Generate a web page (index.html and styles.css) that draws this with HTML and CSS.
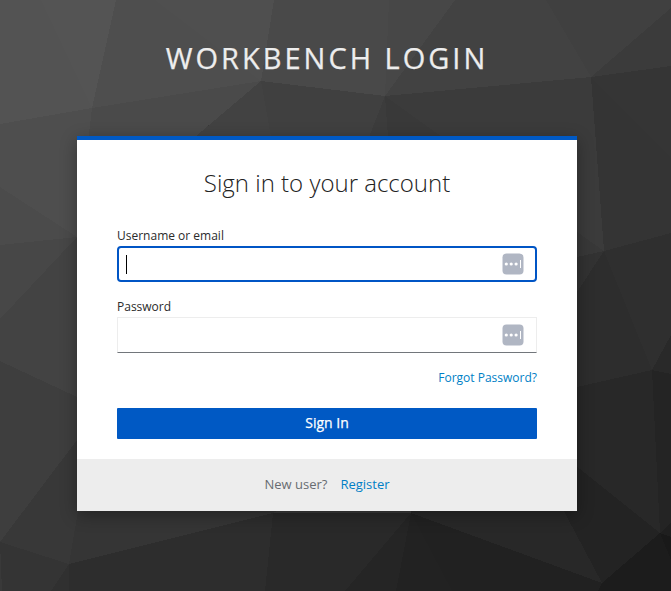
FILE: index.html
```html
<!DOCTYPE html>
<html lang="en">
<head>
<meta charset="utf-8">
<title>Workbench Login</title>
<link rel="stylesheet" href="styles.css">
</head>
<body>
<svg class="backdrop" viewBox="0 0 671 591" aria-hidden="true">
  <rect width="671" height="591" fill="#3a3a3a"/>
  <path fill="#535353" d="M0 0H41L92 108L0 124Z"/>
  <path fill="#545454" d="M41 0H116L92 108Z"/>
  <path fill="#4e4e4e" d="M116 0H155L261 81L92 108Z"/>
  <path fill="#4f4f4f" d="M155 0H274L261 81Z"/>
  <path fill="#494949" d="M274 0H389L385 96L261 81Z"/>
  <path fill="#474747" d="M389 0H455L385 96Z"/>
  <path fill="#424242" d="M455 0H546L591 77L385 96Z"/>
  <path fill="#404040" d="M546 0H671V8L591 77Z"/>
  <path fill="#3b3b3b" d="M671 8V66L591 77Z"/>
  <path fill="#353535" d="M671 66V158L591 77Z"/>
  <path fill="#343434" d="M591 77L671 158V233L604 251Z"/>
  <path fill="#4e4e4e" d="M0 124L92 108L77 237L0 187Z"/>
  <path fill="#4a4a4a" d="M92 108L261 81L77 237Z"/>
  <path fill="#424242" d="M261 81L195 137H271Z"/>
  <path fill="#404040" d="M261 81L385 96L369 137H271Z"/>
  <path fill="#3c3c3c" d="M385 96L369 137H388Z"/>
  <path fill="#393939" d="M385 96L388 137H442Z"/>
  <path fill="#3b3b3b" d="M385 96L591 77L604 251L442 137Z"/>
  <path fill="#4b4b4b" d="M0 187L77 237L0 245Z"/>
  <path fill="#474747" d="M0 245L77 237L0 319Z"/>
  <path fill="#434343" d="M0 319L77 237V397L0 361Z"/>
  <path fill="#3e3e3e" d="M0 361L77 397V440L0 542Z"/>
  <path fill="#383838" d="M0 542L77 440L79 511L69 564Z"/>
  <path fill="#343434" d="M0 542L69 564L51 591H2Z"/>
  <path fill="#393939" d="M0 542L2 591H0Z"/>
  <path fill="#303030" d="M51 591L69 564V591Z"/>
  <path fill="#353535" d="M79 505H290L273 513L69 564Z"/>
  <path fill="#2d2d2d" d="M69 564L273 513L265 591H69Z"/>
  <path fill="#292929" d="M273 513H411L345 591H265Z"/>
  <path fill="#252525" d="M411 513L345 591H396Z"/>
  <path fill="#222222" d="M411 513L396 591H452Z"/>
  <path fill="#212121" d="M411 513L602 583L598 591H452Z"/>
  <path fill="#282828" d="M411 513V500H558L602 583Z"/>
  <path fill="#232323" d="M558 500L570 461L660 533L602 583Z"/>
  <path fill="#1c1c1c" d="M602 583L660 533L671 560V591H598Z"/>
  <path fill="#191919" d="M660 533L671 537V560Z"/>
  <path fill="#1f1f1f" d="M660 533L671 522V537Z"/>
  <path fill="#242424" d="M652 370L671 374V522L660 533Z"/>
  <path fill="#282828" d="M577 387L652 370L660 533L570 461Z"/>
  <path fill="#2d2d2d" d="M604 251L577 292V387L652 370Z"/>
  <path fill="#2f2f2f" d="M604 251L671 233V335L652 370Z"/>
  <path fill="#292929" d="M671 335V374L652 370Z"/>
  <path fill="#323232" d="M604 251L577 257V292Z"/>
  <path fill="#383838" d="M604 251L577 232V257Z"/>
</svg>
<div class="page">
  <header class="brand">Workbench Login</header>
  <main class="card">
    <h1 class="title">Sign in to your account</h1>
    <form class="form">
      <label class="label" for="username">Username or email</label>
      <div class="field field-focused" id="username">
        <span class="caret"></span>
        <svg class="key" viewBox="0 0 22 22"><rect x=".5" y=".5" width="21" height="21" rx="4"/><circle cx="4.3" cy="11" r="1.6"/><circle cx="9.2" cy="11" r="1.6"/><circle cx="14.1" cy="11" r="1.6"/><path d="M18.5 7v8"/></svg>
      </div>
      <label class="label" for="password">Password</label>
      <div class="field" id="password">
        <svg class="key" viewBox="0 0 22 22"><rect x=".5" y=".5" width="21" height="21" rx="4"/><circle cx="4.3" cy="11" r="1.6"/><circle cx="9.2" cy="11" r="1.6"/><circle cx="14.1" cy="11" r="1.6"/><path d="M18.5 7v8"/></svg>
      </div>
      <a class="forgot" href="#">Forgot Password?</a>
      <button class="submit" type="button">Sign In</button>
    </form>
    <footer class="signup"><span>New user?</span><a href="#">Register</a></footer>
  </main>
</div>
</body>
</html>
```
FILE: styles.css
```css
* { box-sizing: border-box; }
body {
  margin: 0;
  height: 591px;
  overflow: hidden;
  background: #393939;
  font-family: "Open Sans", sans-serif;
  color: #2b2b2b;
}
a { color: #007fc6; text-decoration: none; }
.backdrop {
  position: absolute;
  top: 0;
  left: 0;
  width: 671px;
  height: 591px;
  shape-rendering: crispEdges;
}
.page { position: relative; width: 654px; }
.brand {
  height: 136px;
  padding-top: 38px;
  font-size: 29px;
  line-height: 40px;
  letter-spacing: 3px;
  text-align: center;
  text-transform: uppercase;
  color: #ededed;
  -webkit-text-stroke: .25px #ededed;
}
.card {
  width: 500px;
  height: 375px;
  margin-left: 77px;
  display: flex;
  flex-direction: column;
  border-top: 4px solid #0059c4;
  background: #fff;
  box-shadow: 0 4px 16px rgba(0, 0, 0, .32);
}
.title {
  margin: 26px 0 0;
  height: 34px;
  font-size: 24px;
  line-height: 34px;
  font-weight: 300;
  text-align: center;
  color: #222;
}
.form { display: flex; flex-direction: column; padding: 27px 40px 0; }
.label { height: 19px; font-size: 12px; line-height: 18px; }
.field {
  display: flex;
  align-items: center;
  height: 36px;
  padding: 0 12px 0 8px;
  border: 1px solid #ededed;
  border-bottom-color: #72767b;
}
.field-focused {
  margin-bottom: 16px;
  padding: 0 11px 0 7px;
  border: 2px solid #0055c5;
  border-radius: 4px;
}
.caret { width: 1px; height: 19px; background: #000; }
.key { width: 22px; height: 22px; margin-left: auto; }
.key rect { fill: #b0b6c3; }
.key circle { fill: #fff; }
.key path { stroke: #fff; }
.forgot { align-self: flex-end; margin-top: 16px; font-size: 12px; line-height: 18px; }
.submit {
  height: 31px;
  margin-top: 21px;
  padding: 0 0 1px;
  border: 0;
  border-radius: 1px;
  background: #0059c4;
  color: #fff;
  font: 400 14px/30px "Open Sans", sans-serif;
  -webkit-text-stroke: .25px #fff;
}
.signup {
  display: flex;
  justify-content: center;
  gap: 13px;
  height: 52px;
  margin-top: auto;
  background: #ededed;
  font-size: 13px;
  line-height: 51px;
  color: #686c71;
}
```
